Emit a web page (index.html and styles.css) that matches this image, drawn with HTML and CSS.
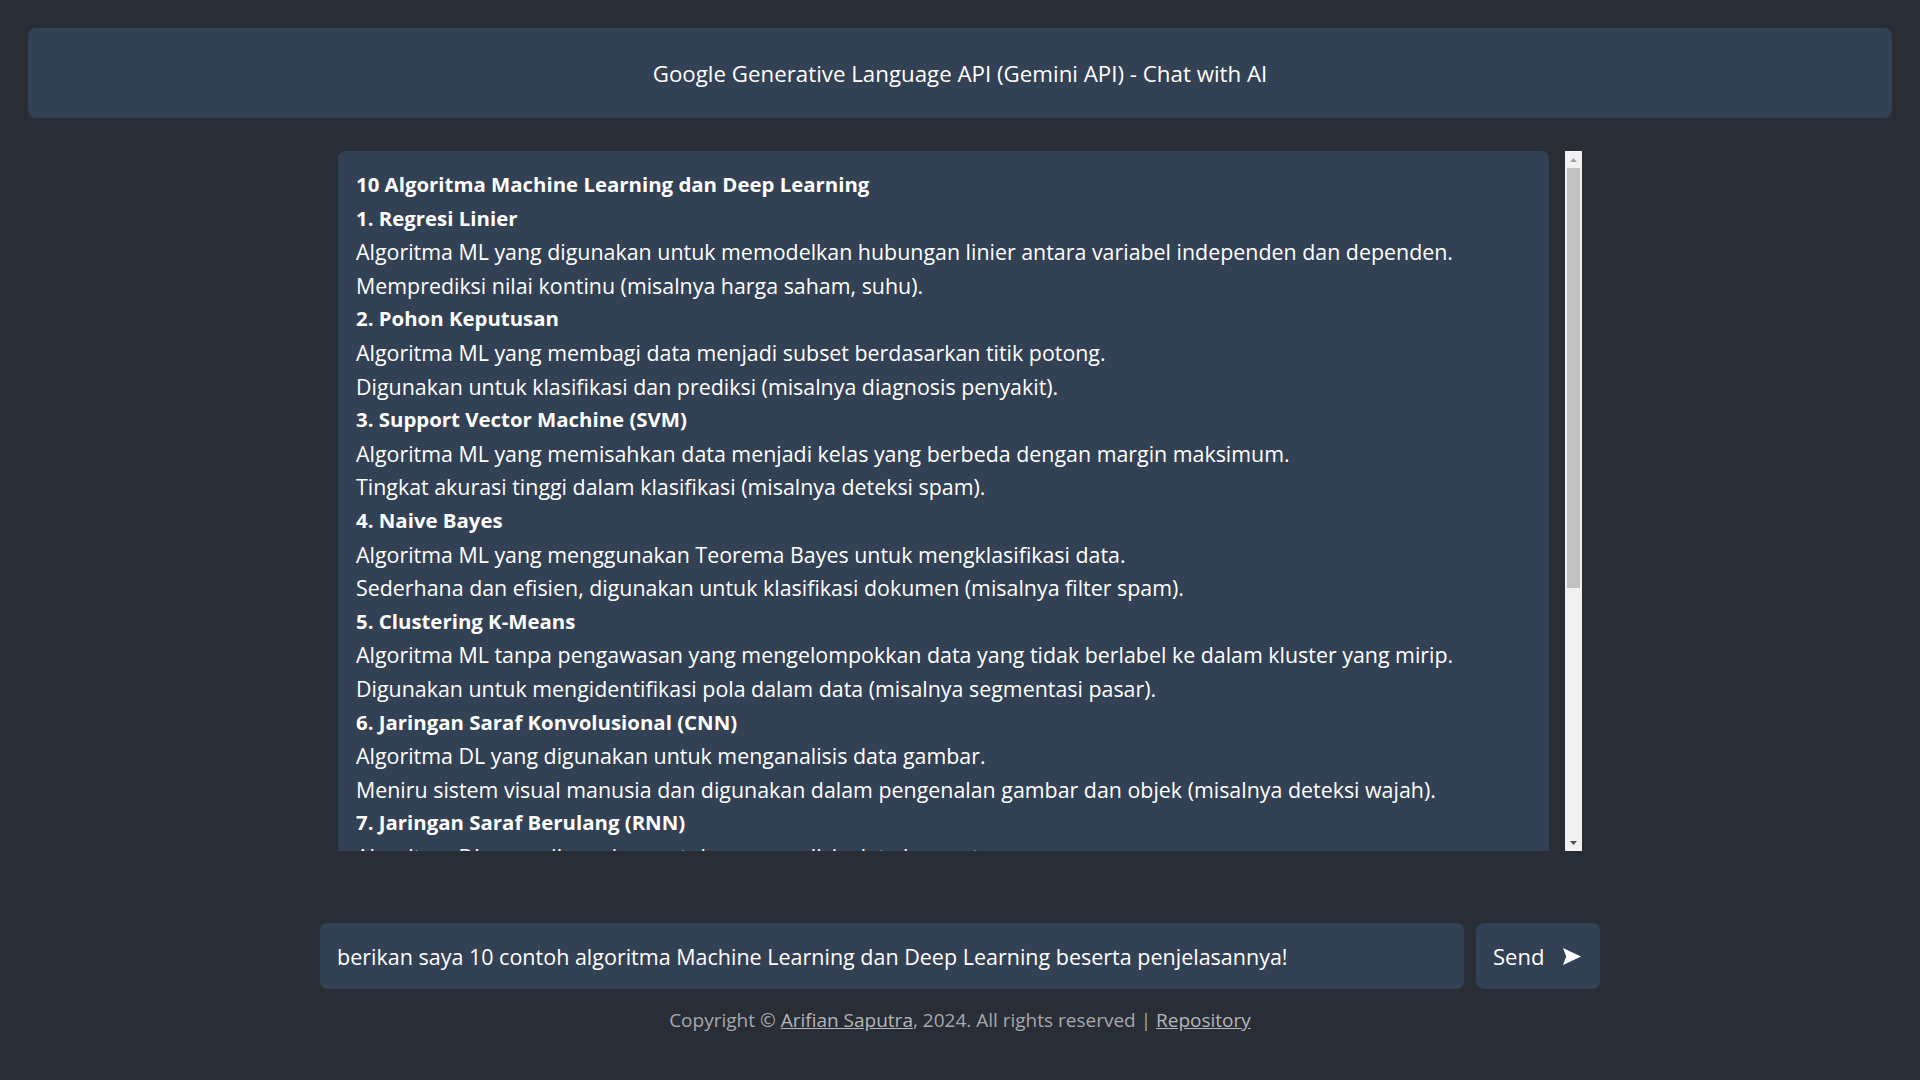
FILE: index.html
```html
<!DOCTYPE html>
<html lang="id">
<head>
<meta charset="utf-8">
<title>Gemini API - Chat with AI</title>
<link rel="stylesheet" href="styles.css">
</head>
<body>
<header class="topbar">
  <h1 class="title">Google Generative Language API (Gemini API) - Chat with AI</h1>
</header>
<main class="chat">
  <div class="viewport">
    <div class="message">
      <p class="h">10 Algoritma Machine Learning dan Deep Learning</p>
      <p class="h">1. Regresi Linier</p>
      <p>Algoritma ML yang digunakan untuk memodelkan hubungan linier antara variabel independen dan dependen.</p>
      <p>Memprediksi nilai kontinu (misalnya harga saham, suhu).</p>
      <p class="h">2. Pohon Keputusan</p>
      <p>Algoritma ML yang membagi data menjadi subset berdasarkan titik potong.</p>
      <p>Digunakan untuk klasifikasi dan prediksi (misalnya diagnosis penyakit).</p>
      <p class="h">3. Support Vector Machine (SVM)</p>
      <p>Algoritma ML yang memisahkan data menjadi kelas yang berbeda dengan margin maksimum.</p>
      <p>Tingkat akurasi tinggi dalam klasifikasi (misalnya deteksi spam).</p>
      <p class="h">4. Naive Bayes</p>
      <p>Algoritma ML yang menggunakan Teorema Bayes untuk mengklasifikasi data.</p>
      <p>Sederhana dan efisien, digunakan untuk klasifikasi dokumen (misalnya filter spam).</p>
      <p class="h">5. Clustering K-Means</p>
      <p>Algoritma ML tanpa pengawasan yang mengelompokkan data yang tidak berlabel ke dalam kluster yang mirip.</p>
      <p>Digunakan untuk mengidentifikasi pola dalam data (misalnya segmentasi pasar).</p>
      <p class="h">6. Jaringan Saraf Konvolusional (CNN)</p>
      <p>Algoritma DL yang digunakan untuk menganalisis data gambar.</p>
      <p>Meniru sistem visual manusia dan digunakan dalam pengenalan gambar dan objek (misalnya deteksi wajah).</p>
      <p class="h">7. Jaringan Saraf Berulang (RNN)</p>
      <p>Algoritma DL yang digunakan untuk menganalisis data berurutan.</p>
      <p>Memiliki memori internal untuk memproses urutan (misalnya pemrosesan bahasa alami).</p>
      <p class="h">8. Random Forest</p>
      <p>Algoritma ML yang menggabungkan banyak pohon keputusan.</p>
      <p>Mengurangi overfitting dan meningkatkan akurasi (misalnya prediksi risiko kredit).</p>
      <p class="h">9. K-Nearest Neighbors (KNN)</p>
      <p>Algoritma ML yang mengklasifikasi data berdasarkan tetangga terdekatnya.</p>
      <p>Sederhana dan efektif untuk klasifikasi (misalnya sistem rekomendasi).</p>
      <p class="h">10. Generative Adversarial Networks (GAN)</p>
      <p>Algoritma DL yang terdiri dari generator dan diskriminator yang saling bersaing.</p>
      <p>Digunakan untuk menghasilkan data baru yang realistis (misalnya pembuatan gambar).</p>
    </div>
  </div>
  <div class="scrollbar" aria-hidden="true">
    <div class="sb-btn">
      <svg width="7" height="4" viewBox="0 0 7 4"><path d="M0 4 L3.5 0 L7 4 Z" fill="#a3a3a3"/></svg>
    </div>
    <div class="sb-track"><div class="sb-thumb"></div></div>
    <div class="sb-btn">
      <svg width="7" height="4" viewBox="0 0 7 4"><path d="M0 0 L7 0 L3.5 4 Z" fill="#505050"/></svg>
    </div>
  </div>
</main>
<form class="composer">
  <input class="prompt" type="text" value="berikan saya 10 contoh algoritma Machine Learning dan Deep Learning beserta penjelasannya!">
  <button class="send" type="button">
    <span>Send</span>
    <svg class="send-icon" width="18" height="17" viewBox="0 0 18 17"><path d="M0 0 L18 8.5 L0 17 L3.2 8.5 Z" fill="#ffffff"/></svg>
  </button>
</form>
<footer class="footer">
  Copyright © <a href="#">Arifian Saputra</a>, 2024. All rights reserved | <a href="#">Repository</a>
</footer>
</body>
</html>
```

FILE: styles.css
```css
html, body {
  margin: 0;
  padding: 0;
}
body {
  background: #292d36;
  font-family: "Open Sans", "Noto Sans", sans-serif;
  color: #ffffff;
  height: 1080px;
  overflow: hidden;
}
.topbar {
  margin: 28px 28px 0;
  height: 90px;
  background: #334155;
  border-radius: 8px;
  display: flex;
  align-items: center;
  justify-content: center;
}
.title {
  margin: 0;
  font-size: 22.3px;
  font-weight: 400;
  color: #ffffff;
}
.chat {
  width: 1244px;
  height: 700px;
  margin: 33px auto 0;
  display: flex;
}
.viewport {
  flex: 1;
  overflow: hidden;
}
.message {
  margin-right: 16px;
  background: #334155;
  border-radius: 8px;
  padding: 17px 18px 20px;
  font-size: 21.4px;
  line-height: 33.6px;
  white-space: nowrap;
}
.message p {
  margin: 0;
}
.message .h {
  font-weight: 700;
  font-size: 20.4px;
}
.scrollbar {
  width: 17px;
  background: #f1f1f1;
  display: flex;
  flex-direction: column;
}
.sb-btn {
  height: 17px;
  display: flex;
  align-items: center;
  justify-content: center;
}
.sb-track {
  flex: 1;
  padding: 0 2px;
}
.sb-thumb {
  height: 420px;
  background: #c1c1c1;
}
.composer {
  width: 1280px;
  height: 66px;
  margin: 72px auto 0;
  display: flex;
  gap: 12px;
}
.prompt {
  flex: 1;
  background: #334155;
  border: none;
  border-radius: 8px;
  padding: 0 17px;
  font-family: inherit;
  font-size: 21.5px;
  color: #ffffff;
  outline: none;
}
.send {
  width: 124px;
  background: #334155;
  border: none;
  border-radius: 8px;
  padding: 0 19px 0 17px;
  display: flex;
  align-items: center;
  justify-content: space-between;
  font-family: inherit;
  font-size: 22px;
  color: #ffffff;
  cursor: pointer;
}
.footer {
  margin-top: 19px;
  text-align: center;
  font-size: 19px;
  line-height: 24px;
  color: #a6a8ad;
}
.footer a {
  color: #b4b6ba;
}
```
